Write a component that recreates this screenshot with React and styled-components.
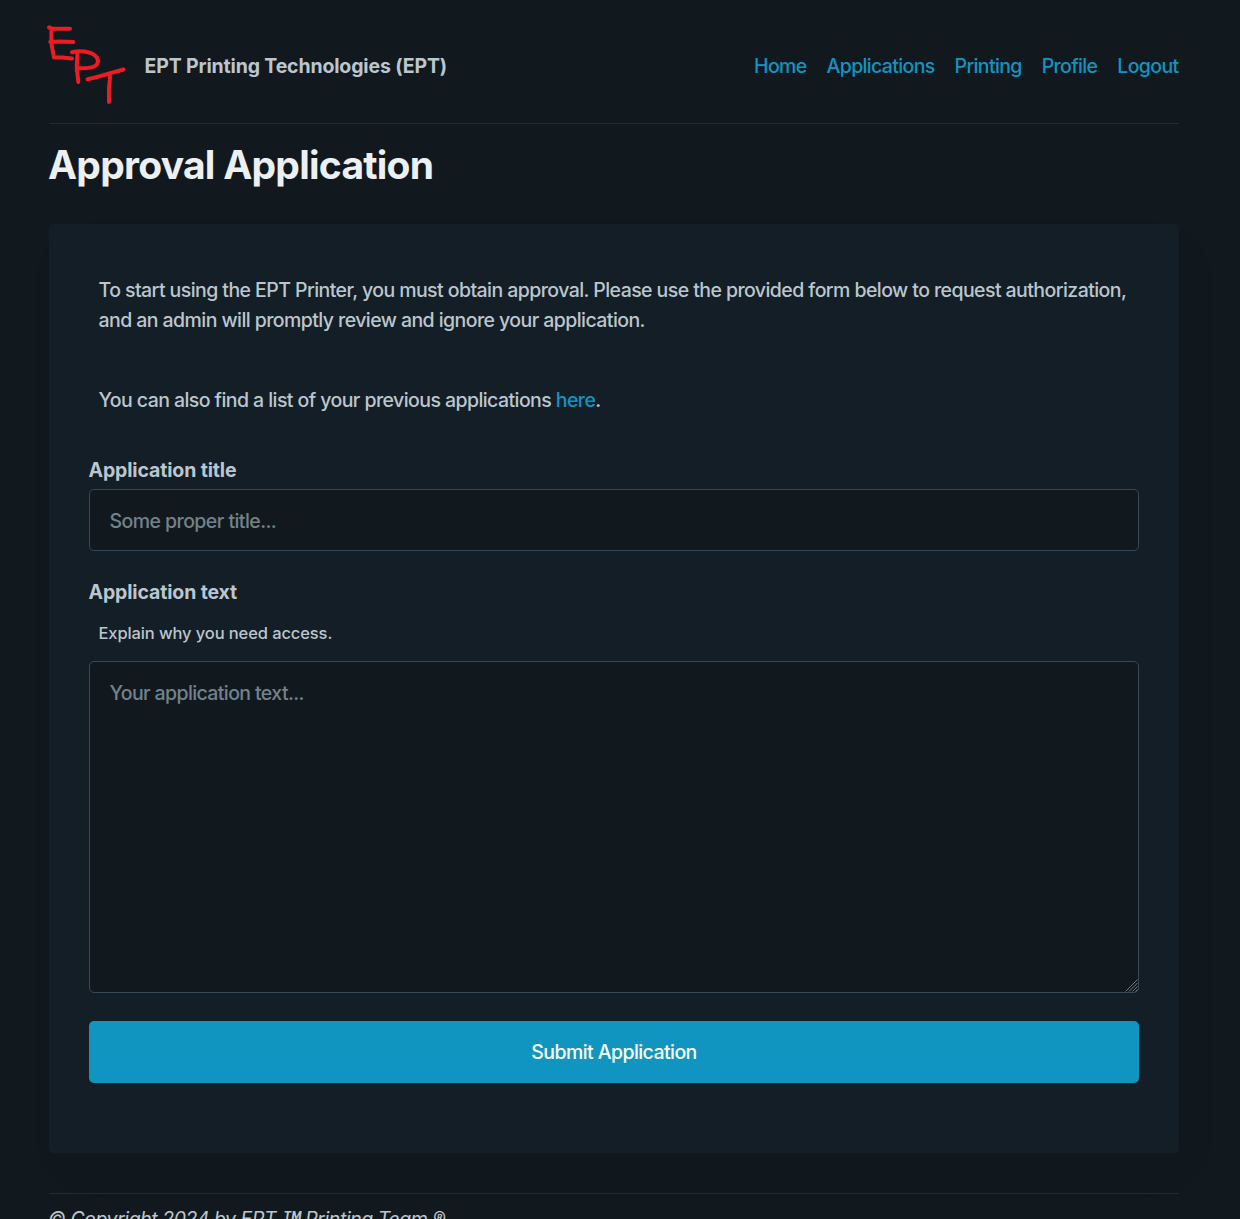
import React from "react";
import styled, { createGlobalStyle } from "styled-components";

const GlobalStyle = createGlobalStyle`
  *, *::before, *::after { box-sizing: border-box; }
  html, body { margin: 0; background: #11191f; }
  body {
    height: 1219px;
    overflow: hidden;
    color: #bbc6ce;
    font-family: Inter, "Liberation Sans", sans-serif;
    font-size: 19.5px;
    font-weight: 450;
    line-height: 30px;
    letter-spacing: -0.57px;
  }
`;

const Page = styled.div`
  width: 1130px;
  margin-left: 49px;
`;

const Header = styled.header`
  display: flex;
  align-items: center;
  justify-content: space-between;
  height: 124px;
  border-bottom: 1px solid #1f2c36;
`;

const Brand = styled.div`
  display: flex;
  align-items: center;
  gap: 16px;
  margin-top: 8px;
`;

const Logo = styled.svg`
  width: 80px;
  height: 80px;
  fill: none;
  stroke: #ed1c24;
  stroke-width: 4;
  stroke-linecap: round;
  stroke-linejoin: round;
  overflow: visible;
`;

const BrandName = styled.strong`
  margin-left: -0.5px;
  font-weight: 720;
  letter-spacing: -0.15px;
`;

const Nav = styled.nav`
  display: flex;
  gap: 20px;
  margin: 8px 0.5px 0 0;
  letter-spacing: -0.65px;
`;

const Link = styled.a`
  color: #1095c1;
  text-decoration: none;
`;

const Title = styled.h1`
  margin: 16px 0 34px -1px;
  color: #edf0f3;
  font-size: 39px;
  font-weight: 720;
  line-height: 50px;
  letter-spacing: -0.75px;
`;

const Card = styled.article`
  height: 929px;
  padding: 41px 40px 0;
  border-radius: 5px;
  background: #141e26;
  box-shadow: 10px 20px 40px -10px rgba(0, 0, 0, 0.08);
`;

const Paragraph = styled.p`
  margin: 0 0 30px;
  padding: 10px 0 10px 9.5px;
`;

const Form = styled.form`
  display: flex;
  flex-direction: column;
`;

const Label = styled.label`
  margin-left: -0.5px;
  font-weight: 720;
  letter-spacing: -0.14px;
`;

const Input = styled.input`
  height: 62px;
  margin: 4px 0 26px;
  padding: 2px 19.5px 0;
  border: 1px solid #374956;
  border-radius: 5px;
  outline: none;
  background: #11191f;
  color: #bbc6ce;
  font: inherit;
  letter-spacing: -0.56px;
  &::placeholder { color: #73828c; opacity: 1; }
`;

const Hint = styled.small`
  margin: 11px 9.5px 13px;
  font-size: 16.5px;
  letter-spacing: -0.11px;
`;

const TextAreaFrame = styled.div`
  position: relative;
  display: flex;
`;

const TextArea = styled.textarea`
  flex: 1;
  height: 332px;
  padding: 16px 19.5px;
  border: 1px solid #374956;
  border-radius: 5px;
  outline: none;
  resize: none;
  background: #11191f;
  color: #bbc6ce;
  font: inherit;
  letter-spacing: -0.61px;
  &::placeholder { color: #73828c; opacity: 1; }
`;

const Grip = styled.svg`
  position: absolute;
  right: 1px;
  bottom: 1px;
  width: 13px;
  height: 13px;
  fill: none;
  stroke: #7e8488;
  stroke-width: 0.9;
`;

const Submit = styled.button`
  height: 62px;
  margin-top: 28px;
  padding: 0;
  border: 0;
  border-radius: 5px;
  background: #1095c1;
  color: #fff;
  font: inherit;
  letter-spacing: -0.57px;
`;

const Footer = styled.footer`
  margin-top: 40px;
  padding-top: 10px;
  border-top: 1px solid #1f2c36;
  font-style: italic;
  letter-spacing: -0.44px;
  text-indent: -1px;
`;

const TradeMark = styled.span`
  font-size: 31px;
  font-weight: 600;
  line-height: 0;
  vertical-align: -8px;
`;

export default function App() {
  return (
    <>
      <GlobalStyle />
      <Page>
        <Header>
          <Brand>
            <Logo viewBox="49 26 80 80" aria-label="EPT">
              <path d="M49 27.5 52 28.5 70 28.7M51.5 28.5 51.3 43 54 57.5 62 57.5 72 58.5M50.3 42 60 41.4 73.3 42" />
              <path d="M72 52.3Q80 50.5 88 52.2C97 54.5 99.5 60 97 64.3Q94 68.5 78.5 68.3M77.5 53.5 76.7 67 78.3 82" />
              <path d="M87.5 79.3Q97 77.5 107 74.2L123.5 69.5M109.3 73.2 110 78Q108.3 89 109 102" />
            </Logo>
            <BrandName>EPT Printing Technologies (EPT)</BrandName>
          </Brand>
          <Nav>
            <Link>Home</Link>
            <Link>Applications</Link>
            <Link>Printing</Link>
            <Link>Profile</Link>
            <Link>Logout</Link>
          </Nav>
        </Header>
        <Title>Approval Application</Title>
        <Card>
          <Paragraph>
            To start using the EPT Printer, you must obtain approval. Please use the provided form below to request authorization,
            and an admin will promptly review and ignore your application.
          </Paragraph>
          <Paragraph>
            You can also find a list of your previous applications <Link>here</Link>.
          </Paragraph>
          <Form>
            <Label htmlFor="title">Application title</Label>
            <Input id="title" placeholder="Some proper title..." />
            <Label htmlFor="text">Application text</Label>
            <Hint>Explain why you need access.</Hint>
            <TextAreaFrame>
              <TextArea id="text" placeholder="Your application text..." />
              <Grip viewBox="0 0 13 13">
                <path d="M0.5 12.5 12.5 0.5M4 12.5 12.5 4M7.5 12.5 12.5 7.5M10.5 12.5 12.5 10.5" />
              </Grip>
            </TextAreaFrame>
            <Submit type="button">Submit Application</Submit>
          </Form>
        </Card>
        <Footer>© Copyright 2024 by EPT <TradeMark>™</TradeMark> Printing Team ®</Footer>
      </Page>
    </>
  );
}
